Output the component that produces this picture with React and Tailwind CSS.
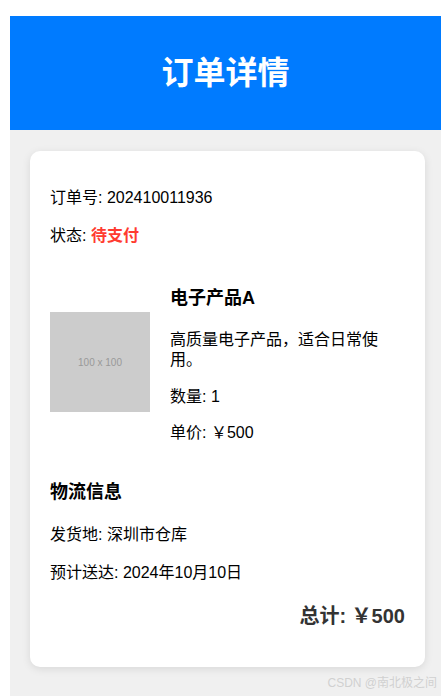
import React from "react";

const font = { fontFamily: '"Liberation Sans", "Noto Sans CJK SC", sans-serif' };

export default function App() {
  return (
    <div className="relative h-screen overflow-hidden bg-white pl-[10px] pt-4" style={font}>
      <div className="flex h-full flex-col bg-[#f0f0f0]">
        <header className="flex h-[114px] shrink-0 items-center justify-center bg-[#007bff]">
          <h1 className="text-[32px] font-bold leading-10 text-white">订单详情</h1>
        </header>

        <div className="pl-5 pr-4 pt-[21px]">
          <div className="rounded-[10px] bg-white px-5 pt-[36px] pb-[37px] text-[16px] text-black shadow-[0_2px_8px_rgba(0,0,0,0.1)]">
            <p className="leading-[22px]">订单号: 202410011936</p>
            <p className="mt-4 leading-[22px]">
              状态: <span className="font-bold text-[#ff3b30]">待支付</span>
            </p>

            <div className="mt-[39px] flex items-start">
              <div className="mt-[26px] flex h-[100px] w-[100px] shrink-0 items-center justify-center bg-[#cccccc] text-[10px] text-[#999999]">
                100 x 100
              </div>
              <div className="ml-5 w-[215px]">
                <h3 className="text-[18px] font-bold leading-6">电子产品A</h3>
                <p className="mt-5 leading-5">高质量电子产品，适合日常使用。</p>
                <p className="mt-4 leading-[22px]">数量: 1</p>
                <p className="mt-[14px] leading-[22px]">单价: ￥500</p>
              </div>
            </div>

            <h3 className="mt-9 text-[18px] font-bold leading-6">物流信息</h3>
            <p className="mt-5 leading-[22px]">发货地: 深圳市仓库</p>
            <p className="mt-4 leading-[22px]">预计送达: 2024年10月10日</p>

            <p className="mt-[18px] text-right text-[20px] font-bold leading-7 text-[#333333]">
              总计: ￥500
            </p>
          </div>
        </div>
      </div>

      <span className="absolute bottom-[4px] right-[4px] text-[12px] text-[#d0d0d0]">
        CSDN @南北极之间
      </span>
    </div>
  );
}
